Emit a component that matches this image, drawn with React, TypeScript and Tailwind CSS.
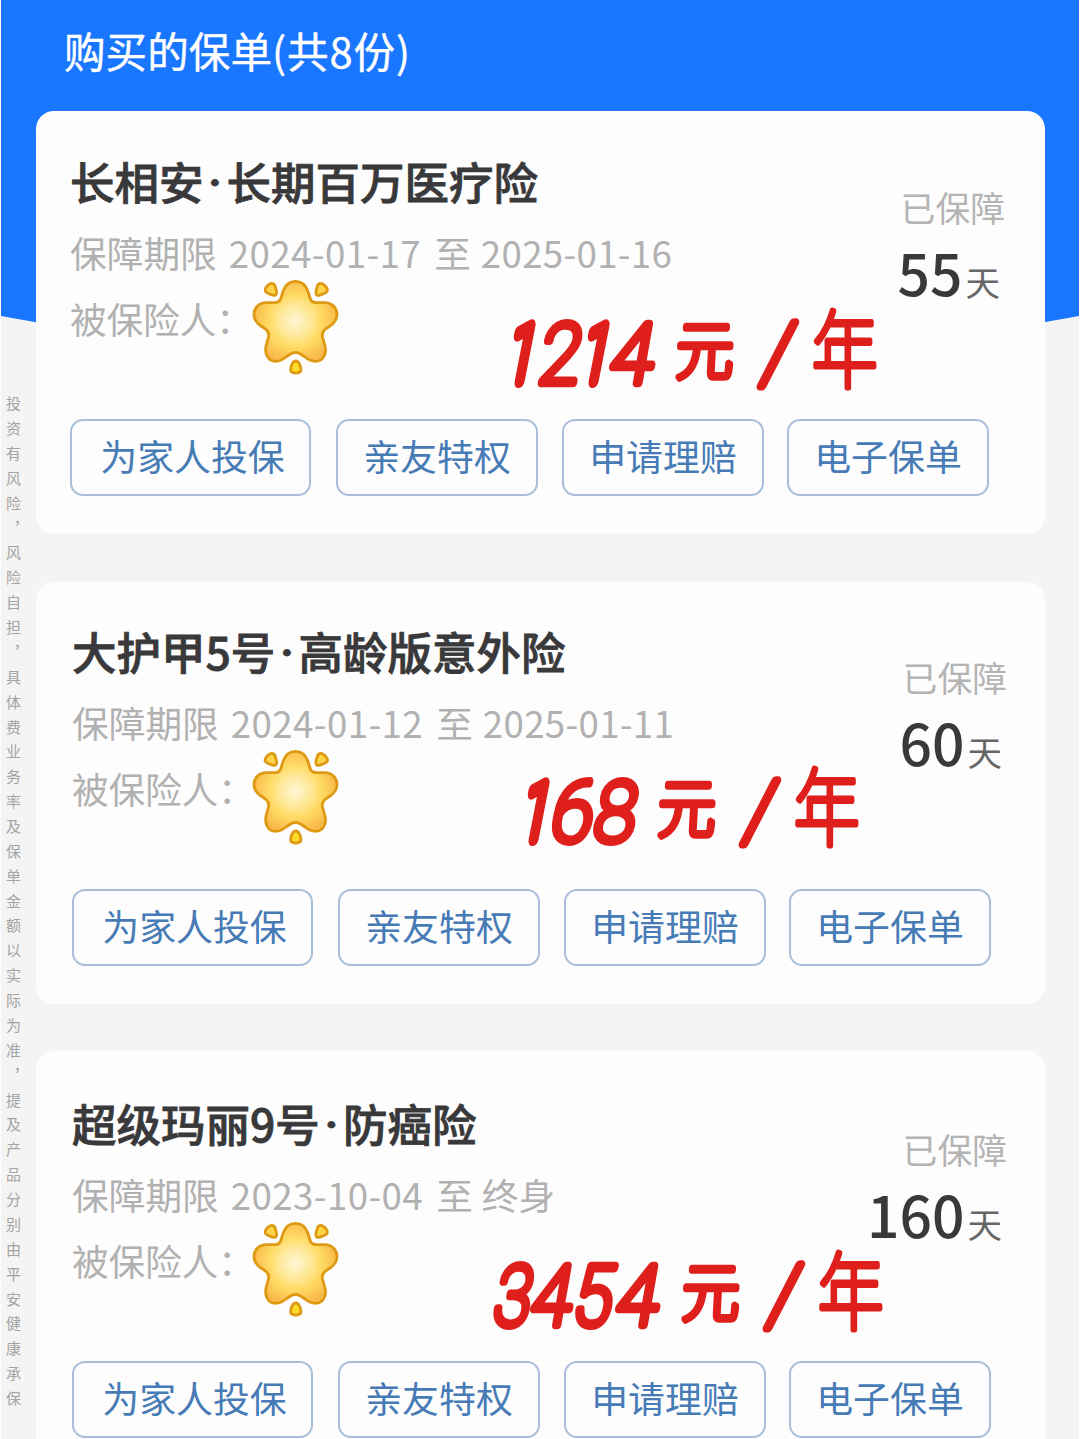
import React from 'react';

type Glyph = {
  ch: string;
  x: number;
  y: number;
  size: number;
  sx: number;
  skew: number;
  cjk?: boolean;
  stroke: number;
};

type Policy = {
  title: [string, string];
  from: string;
  to: string;
  days: string;
  card: string;
  star: string;
  note: Glyph[];
  noteX: number;
  noteY: number;
};

// The unit mark is shared by every price note; x and y are relative to its own start.
const unit = (x: number, y: number): Glyph[] => [
  { ch: '元', x: x - 1, y: y + 55, size: 64, sx: 0.9, skew: -3, cjk: true, stroke: 7 },
  { ch: '/', x: x + 84, y: y + 62, size: 82, sx: 0.88, skew: -10, stroke: 9 },
  { ch: '年', x: x + 136, y: y + 62, size: 84, sx: 0.78, skew: 0, cjk: true, stroke: 6 },
];

const digit = (ch: string, x: number, sx = 1): Glyph => ({ ch, x, y: 81, size: 83, sx, skew: -10, stroke: 8.5 });
const one = (x: number): Glyph => ({ ch: '1', x, y: 79, size: 77, sx: 0.62, skew: -11, stroke: 14 });

const policies: Policy[] = [
  {
    title: ['长相安', '长期百万医疗险'],
    from: '2024-01-17',
    to: '2025-01-16',
    days: '55',
    card: 'h-[423px] pl-[34px] pt-[40px] pr-[40px]',
    star: 'left-[181px]',
    noteX: 464,
    noteY: 191,
    note: [one(5), digit('2', 36, 0.9), one(79), digit('4', 107, 0.93), ...unit(176, 17)],
  },
  {
    title: ['大护甲5号', '高龄版意外险'],
    from: '2024-01-12',
    to: '2025-01-11',
    days: '60',
    card: 'mt-[48px] h-[422px] pl-[36px] pt-[39px] pr-[38px]',
    star: 'left-[179px]',
    noteX: 464,
    noteY: 178,
    note: [one(19), digit('6', 48, 0.91), digit('8', 91, 0.9), ...unit(158, 17)],
  },
  {
    title: ['超级玛丽9号', '防癌险'],
    from: '2023-10-04',
    to: '终身',
    days: '160',
    card: 'mt-[47px] h-[440px] pl-[36px] pt-[42px] pr-[38px]',
    star: 'left-[179px]',
    noteX: 464,
    noteY: 193,
    note: [digit('3', -9, 0.8), digit('4', 28, 0.87), digit('5', 70, 0.85), digit('4', 113, 0.91), ...unit(182, 17)],
  },
];

const actions = [
  { label: '为家人投保', box: 'w-[241px] pl-[4px]' },
  { label: '亲友特权', box: 'ml-[25px] w-[202px]' },
  { label: '申请理赔', box: 'ml-[24px] w-[202px]' },
  { label: '电子保单', box: 'ml-[23px] w-[202px]' },
];

function PriceNote({ glyphs, x, y }: { glyphs: Glyph[]; x: number; y: number }) {
  return (
    <svg
      className="absolute overflow-visible"
      style={{ left: x, top: y }}
      width="400"
      height="100"
      fill="#df1f1c"
      stroke="#df1f1c"
      strokeLinejoin="round"
      strokeLinecap="round"
    >
      {glyphs.map((g, i) => (
        <text
          key={i}
          fontFamily={g.cjk ? '"Noto Sans CJK SC", sans-serif' : 'Roboto, sans-serif'}
          fontWeight={100}
          fontSize={g.size}
          strokeWidth={g.stroke}
          transform={`translate(${g.x} ${g.y}) skewX(${g.skew}) scale(${g.sx} 1)`}
        >
          {g.ch}
        </text>
      ))}
    </svg>
  );
}

function Star({ id, position }: { id: string; position: string }) {
  return (
    <svg className={`absolute -top-[8px] ${position}`} width="90" height="98" viewBox="0 0 90 98">
      <defs>
        <radialGradient id={id} cx="44" cy="44" r="42" gradientUnits="userSpaceOnUse">
          <stop offset="0" stopColor="#fff6d6" />
          <stop offset="0.3" stopColor="#ffeba6" />
          <stop offset="0.62" stopColor="#ffdb66" />
          <stop offset="1" stopColor="#f8b94a" />
        </radialGradient>
      </defs>
      <g stroke="#df9a14" strokeWidth="2.8" strokeLinejoin="round">
        <path
          fill={`url(#${id})`}
          d="M44.500 4.300C51 4.300 55 8.500 57 14.500L59 21Q60.300 25.600 65 25.600H73.500C81 25.600 86 31 86 37.500C86 42 83.500 46 79 49L74.500 52Q70.500 55 71.500 60L74 69C76 77 72 84.300 64.500 84.300C60.500 84.300 57 82.500 54 80L49.500 77Q44.500 74 39.500 77L35 80C32 82.500 28.500 84.300 24.500 84.300C17 84.300 13.500 77 15 69L17.500 60Q18.500 55 14.500 52L10 49C5.500 46 3 42 3 37.500C3 31 8 25.600 15.500 25.600H24Q28.700 25.600 30 21L32 14.500C34 8.500 38 4.300 44.500 4.300Z"
        />
        <path fill="#ffd34a" d="M14.500 11.500C15.500 9.500 17.800 7 19.800 6.500C22 6 23.600 7.500 24.300 9.500C25 11.500 25.900 14 25.600 16.300C25.300 18.700 22.500 18.800 20 17.600C18 16.700 15.500 16 14.500 14.700C13.700 13.700 14 12.500 14.500 11.500Z" />
        <path fill="#ffd34a" d="M76 11.500C75 9.500 72.700 7 70.700 6.500C68.500 6 66.900 7.500 66.200 9.500C65.500 11.500 64.600 14 64.900 16.300C65.200 18.700 68 18.800 70.500 17.600C72.500 16.700 75 16 76 14.700C76.800 13.700 76.500 12.500 76 11.500Z" />
        <path fill="#ffdc29" d="M44.800 84C48 84 49.800 89.500 50 92.500C50.200 95 47.500 96 44.800 96C42 96 39.400 95 39.600 92.500C39.800 89.500 41.500 84 44.800 84Z" />
      </g>
    </svg>
  );
}

function PolicyCard({ policy, index }: { policy: Policy; index: number }) {
  return (
    <section className={`relative w-[1009px] rounded-[18px] bg-[#fdfdfd] ${policy.card}`}>
      <div className="flex justify-between whitespace-nowrap">
        <div>
          <h2 className="flex h-[60px] items-center text-[44.5px] leading-[60px] font-medium text-[#39393b] [-webkit-text-stroke:0.8px_#39393b]">
            <span>{policy.title[0]}</span>
            <span className="flex w-[23px] justify-center pt-[3px] font-['Roboto',sans-serif] font-bold">·</span>
            <span>{policy.title[1]}</span>
          </h2>
          <p className="mt-2 h-[66px] text-[36.7px] leading-[66px] text-[#b1b1b1]">
            保障期限<span className="mr-[13px] ml-[12px] tracking-[0.4px]">{policy.from}</span>至
            <span className={policy.to.includes('-') ? 'ml-[10px] tracking-[0.3px]' : 'ml-[9px]'}>{policy.to}</span>
          </p>
          <div className="relative h-[66px] text-[36.7px] leading-[66px] tracking-[-0.2px] text-[#b1b1b1]">
            被保险人：
            <Star id={`star-${index}`} position={policy.star} />
          </div>
        </div>
        <div className="flex flex-col items-end pt-[31px]">
          <span className="h-[50px] text-[34.8px] leading-[50px] text-[#b4b4b4]">已保障</span>
          <div className="mr-[5px] flex h-[76px] items-baseline leading-[78px]">
            <span className="text-[57px] font-medium text-[#39393b]">{policy.days}</span>
            <span className="ml-[3px] text-[34.5px] text-[#666]">天</span>
          </div>
        </div>
      </div>
      <div className="mt-[68px] flex">
        {actions.map((a) => (
          <button
            key={a.label}
            className={`h-[77px] shrink-0 rounded-[13px] border-2 border-[#a9bfd8] pb-[4px] text-[36.9px] leading-none whitespace-nowrap text-[#477bb6] ${a.box}`}
          >
            {a.label}
          </button>
        ))}
      </div>
      <PriceNote glyphs={policy.note} x={policy.noteX} y={policy.noteY} />
    </section>
  );
}

export default function App() {
  return (
    <main lang="zh-CN" className="relative h-[1439px] w-[1080px] overflow-hidden border-x border-[#fdfdfd] bg-[#f4f4f4] font-['Noto_Sans_CJK_SC',sans-serif]">
      <div className="absolute inset-x-0 top-0 h-[420px] bg-[#1976ff] [clip-path:polygon(0_0,100%_0,100%_316px,50%_412px,0_316px)]" />
      <div className="relative flex">
        <aside className="flex w-[35px] shrink-0 justify-start pt-[396px] pl-[1px] text-[15px] leading-[22px] tracking-[9.87px] whitespace-nowrap text-[#a3a3a3]">
          <p className="h-[1030px] w-[22px] shrink-0 [writing-mode:vertical-rl]">投资有风险，风险自担，具体费业务率及保单金额以实际为准，提及产品分别由平安健康承保</p>
        </aside>
        <div>
          <h1 className="h-[111px] pl-[28px] text-[41.6px] leading-[101px] text-white [-webkit-text-stroke:0.4px_white]">
            购买的保单<span className="tracking-[0.9px]">(共8份)</span>
          </h1>
          {policies.map((p, i) => (
            <PolicyCard key={p.days} policy={p} index={i} />
          ))}
        </div>
      </div>
    </main>
  );
}
